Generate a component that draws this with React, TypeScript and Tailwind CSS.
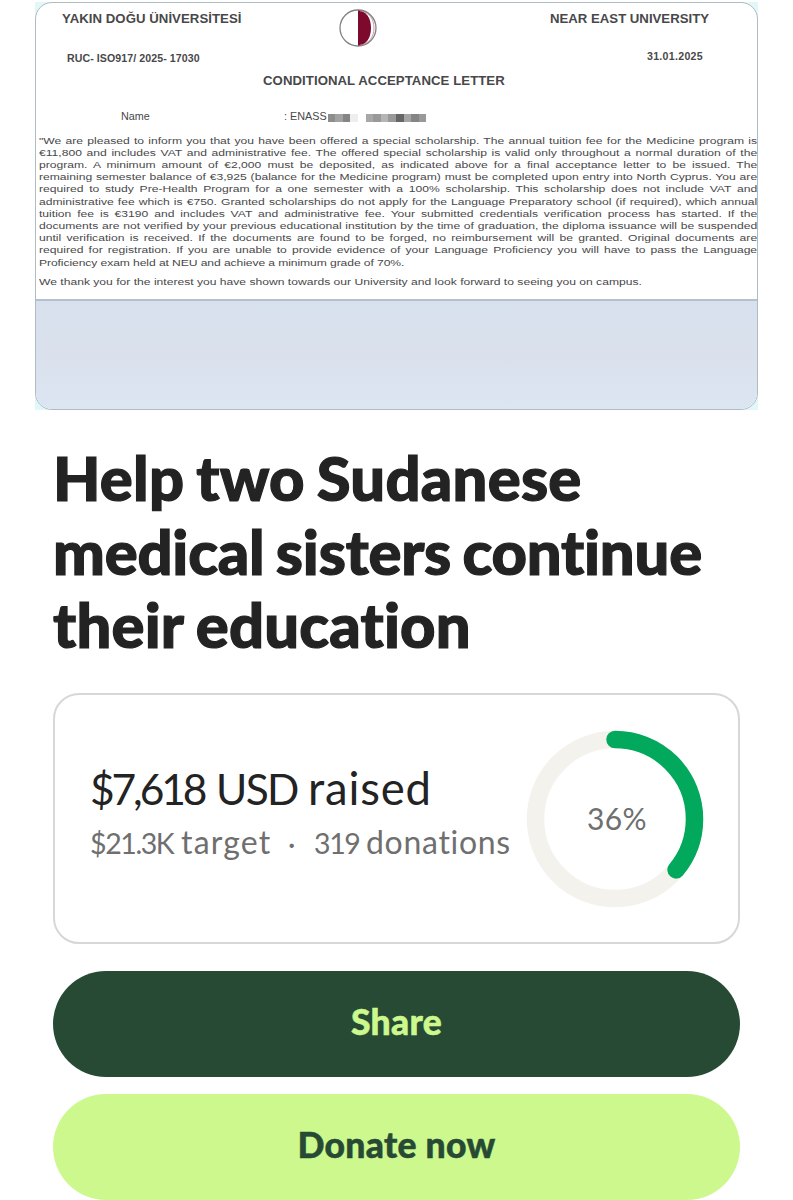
const letterLines = [
  '"We are pleased to inform you that you have been offered a special scholarship. The annual tuition fee for the Medicine program is',
  '€11,800 and includes VAT and administrative fee. The offered special scholarship is valid only throughout a normal duration of the',
  'program. A minimum amount of €2,000 must be deposited, as indicated above for a final acceptance letter to be issued. The',
  'remaining semester balance of €3,925 (balance for the Medicine program) must be completed upon entry into North Cyprus. You are',
  'required to study Pre-Health Program for a one semester with a 100% scholarship. This scholarship does not include VAT and',
  'administrative fee which is €750. Granted scholarships do not apply for the Language Preparatory school (if required), which annual',
  'tuition fee is €3190 and includes VAT and administrative fee. Your submitted credentials verification process has started. If the',
  'documents are not verified by your previous educational institution by the time of graduation, the diploma issuance will be suspended',
  'until verification is received. If the documents are found to be forged, no reimbursement will be granted. Original documents are',
  'required for registration. If you are unable to provide evidence of your Language Proficiency you will have to pass the Language',
];

const redaction = [
  'bg-[#8d8d8d]', 'bg-[#a2a2a2]', 'bg-[#858585]', 'bg-[#eeeeee]', 'bg-white',
  'bg-[#a8a8a8]', 'bg-[#999999]', 'bg-[#b5b5b5]', 'bg-[#999999]', 'bg-[#666666]',
  'bg-[#a5a5a5]', 'bg-[#858585]', 'bg-[#999999]',
];

function UniversityLogo() {
  return (
    <svg viewBox="0 0 38 38" className="h-[38px] w-[38px]">
      <circle cx="19" cy="19" r="18" fill="#fff" stroke="#858085" strokeWidth="1.3" />
      <path d="M19 1.5 C27 1.5 32 9 32 19 S27 36.5 19 36.5 Z" fill="#7d0a2c" />
      <path d="M21 2 C30 3 35 10 35 19 S30 35 21 36" fill="none" stroke="#b98796" strokeWidth="0.8" />
    </svg>
  );
}

function Letter() {
  return (
    <div className="ml-[35px] h-[408px] w-[723px] bg-[#e2f7f8]">
      <article className="flex h-full w-full flex-col overflow-hidden rounded-[17px] border border-[#aebcc4] bg-white font-['Liberation_Sans',sans-serif] text-[#48484a]">
        <header className="flex h-[66px] shrink-0 justify-between pr-[48px] pl-[26px]">
          <div className="w-[277px] font-bold whitespace-nowrap">
            <p className="mt-[8px] text-[13.2px] leading-[16px] tracking-[0.05px]">YAKIN DOĞU ÜNİVERSİTESİ</p>
            <p className="mt-[23px] ml-[5px] text-[10.6px] leading-[16px] tracking-[0.08px]">RUC- ISO917/ 2025- 17030</p>
          </div>
          <div className="mt-[6px]"><UniversityLogo /></div>
          <div className="flex flex-1 flex-col items-end font-bold whitespace-nowrap">
            <p className="mt-[8px] text-[13.2px] leading-[16px]">NEAR EAST UNIVERSITY</p>
            <p className="mt-[21px] mr-[6px] text-[10.6px] leading-[16px] tracking-[0.3px]">31.01.2025</p>
          </div>
        </header>
        <h2 className="ml-[227px] h-[39px] shrink-0 pt-[3px] text-[13.2px] leading-[18px] font-bold tracking-[0.06px] whitespace-nowrap">
          CONDITIONAL ACCEPTANCE LETTER
        </h2>
        <div className="flex h-[26px] shrink-0 text-[10.8px] leading-[17px]">
          <span className="ml-[85px] w-[163px]">Name</span>
          <span className="whitespace-nowrap">: ENASS</span>
          <span className="mt-[6px] ml-[1px] flex h-[9px]">
            {redaction.map((shade, i) => (
              <i key={i} className={`h-[8px] w-[7.6px] ${shade}`} />
            ))}
          </span>
        </div>
        <div className="ml-[3px] w-[574.5px] origin-left scale-x-[1.25] pt-[0.6px] text-[9.7px] leading-[12.2px] whitespace-nowrap">
          {letterLines.map((line) => (
            <p key={line} className="[text-align-last:justify]">{line}</p>
          ))}
          <p className="tracking-[-0.07px]">Proficiency exam held at NEU and achieve a minimum grade of 70%.</p>
          <p className="mt-[7.5px]">
            We thank you for the interest you have shown towards our University and look forward to seeing you on campus.
          </p>
        </div>
        <div className="mt-auto h-[110px] shrink-0 border-t-2 border-[#b5c0cd] bg-linear-to-b from-[#d7e1ed] via-[#dae1ed] to-[#dce5f2]" />
      </article>
    </div>
  );
}

function ProgressRing({ percent }: { percent: number }) {
  const length = 2 * Math.PI * 79.5;
  return (
    <div className="grid h-[178px] w-[178px] shrink-0 place-items-center">
      <svg viewBox="0 0 178 178" className="col-start-1 row-start-1 h-full w-full -rotate-90" fill="none" strokeWidth="17.5">
        <circle cx="89" cy="89" r="79.5" stroke="#f3f2ed" />
        <circle cx="89" cy="89" r="79.5" stroke="#02a95c" strokeLinecap="round" strokeDasharray={`${(length * percent) / 100} ${length}`} />
      </svg>
      <span className="col-start-1 row-start-1 -mt-[2px] ml-[4px] text-[30px] leading-9 tracking-[0.4px] text-[#6f6f6f]">{percent}%</span>
    </div>
  );
}

export default function App() {
  return (
    <main className="h-[1200px] w-[793px] overflow-hidden bg-white pt-[2px] font-['Lato',sans-serif] text-[#232323]">
      <Letter />
      <div className="px-[53px]">
        <h1 className="mt-[31px] text-[61.5px] leading-[73.7px] font-black whitespace-nowrap [-webkit-text-stroke:1.2px_#232323] [font-variant-ligatures:none]">
          <span className="block tracking-[0.25px] [word-spacing:-3px]">Help two Sudanese</span>
          <span className="block tracking-[-0.2px] [word-spacing:-3px]">medical sisters continue</span>
          <span className="block tracking-[0.2px] [word-spacing:-2px]">their education</span>
        </h1>
        <section className="mt-[31px] flex h-[251px] items-center rounded-[26px] border-2 border-[#d7d7d7] pr-[34px] pl-[35px]">
          <div className="-mt-[7px] flex-1 whitespace-nowrap [font-variant-ligatures:none]">
            <p className="flex items-baseline text-[42.5px] leading-[54px]">
              <span className="w-[126px] tracking-[-3.1px]">$7,618</span>
              <span className="w-[92px] tracking-[-1.6px]">USD</span>
              <span className="text-[45.5px] tracking-[0.8px]">raised</span>
            </p>
            <p className="flex items-baseline text-[28.5px] leading-[52px] text-[#6f6f6f]">
              <span className="w-[91px] tracking-[-1.4px]">$21.3K</span>
              <span className="w-[107px] text-[32px] tracking-[1.2px]">target</span>
              <span className="w-[26px]">·</span>
              <span className="w-[52px] tracking-[-1.4px]">319</span>
              <span className="text-[32px] tracking-[0.7px]">donations</span>
            </p>
          </div>
          <ProgressRing percent={36} />
        </section>
        <div className="mt-[27px] flex flex-col gap-[17px] text-[35.5px] leading-[48px] font-black tracking-[0.3px]">
          <button className="h-[106px] rounded-full bg-[#274a34] pb-[5px] text-[#ccf88e] [-webkit-text-stroke:0.5px_#ccf88e]">Share</button>
          <button className="h-[106px] rounded-full bg-[#ccf88e] pb-[5px] text-[#274a34] [-webkit-text-stroke:0.5px_#274a34]">Donate now</button>
        </div>
      </div>
    </main>
  );
}
